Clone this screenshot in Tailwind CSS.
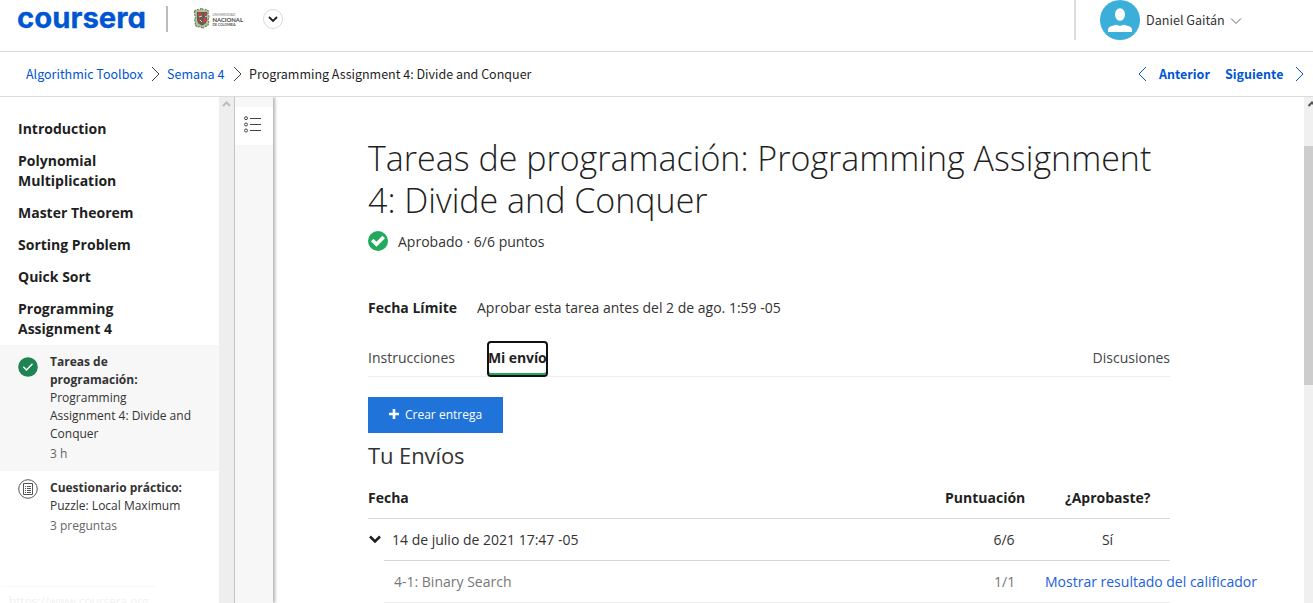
<!DOCTYPE html>
<html lang="es">
<head>
<meta charset="utf-8">
<title>Coursera</title>
<script src="https://cdn.jsdelivr.net/npm/@tailwindcss/browser@4"></script>
</head>
<body class="w-[1313px] h-[603px] overflow-hidden bg-white font-['Open_Sans',sans-serif] text-[14px] leading-5 text-[#1f1f1f]">
<div class="flex flex-col h-[603px]">
  <header class="h-[52px] shrink-0 border-b border-[#dcdcdc] flex items-start">
    <svg class="ml-[18px] mt-1 shrink-0 overflow-visible" width="128" height="30" viewBox="0 0 128 30"><text x="-1" y="23.5" textLength="129" lengthAdjust="spacingAndGlyphs" fill="#0056d2" stroke="#0056d2" stroke-width=".3" class="font-['Inter',sans-serif] text-[29px] font-bold [font-feature-settings:'cv11','ss03']">coursera</text></svg>
    <div class="ml-[20px] mt-[6px] w-[2px] h-[26px] bg-[#bbb]"></div>
    <svg class="ml-[25px] mt-[7px]" width="52" height="24" viewBox="0 0 52 24">
      <path d="M1.500 4l2.500-1.500 2.500.5 2-2 2 2 2.500-.5L15.500 4l-.5 3 1 3-1 3 1 3-1.500 3-3 .5-2 2-2-2-3 .5L2 18l.5-3-1-2 1-3-1-3z" fill="#b3bf9c" stroke="#71825c" stroke-width="1.200" stroke-dasharray="2 1"/>
      <path d="M4 5h10v8q-.5 4-5 5.500q-4.500-1.500-5-5.500z" fill="#5b6055"/>
      <path d="M5 6h3.500v4H5zM10 11h3.500v2.500l-2 2.500H10zM11 6h2.500v2.500H11zM5 12h2v2H5z" fill="#d13a48"/>
      <path d="M7 13l2 2M6 10l3-1M10 4l2-2M12 10l2-1" stroke="#d8d6cc" stroke-width="1"/>
      <text x="19.500" y="9" textLength="23" lengthAdjust="spacingAndGlyphs" fill="#777" class="font-['Lato',sans-serif] text-[3.200px]">UNIVERSIDAD</text>
      <text x="19.500" y="14.700" textLength="30.500" lengthAdjust="spacingAndGlyphs" fill="#444" class="font-['Lato',sans-serif] text-[5.500px] font-bold">NACIONAL</text>
      <text x="19.500" y="18.500" textLength="23" lengthAdjust="spacingAndGlyphs" fill="#555" class="font-['Lato',sans-serif] text-[3px] font-bold">DE COLOMBIA</text>
    </svg>
    <svg class="ml-[17px] mt-[8px]" width="22" height="22" viewBox="0 0 22 22" fill="none"><circle cx="11" cy="11" r="9.500" stroke="#d9d9d9"/><path d="M7 9l4 4 4-4" stroke="#1f1f1f" stroke-width="1.800"/></svg>
    <div class="ml-auto w-[2px] h-10 bg-[#ddd]"></div>
    <svg class="ml-6" width="40" height="40" viewBox="0 0 40 40"><circle cx="20" cy="20" r="20" fill="#3bafda"/><ellipse cx="20" cy="14.500" rx="5" ry="6.300" fill="#fff"/><path d="M8 32v-2q0-3 3.500-4l5-1.200q3.500 2 7 0l5 1.200q3.500 1 3.500 4v2z" fill="#fff"/></svg>
    <div class="ml-[6px] mt-[10px] w-[80px] whitespace-nowrap font-['Noto_Sans_CJK_SC',sans-serif] text-[12.600px] text-[#333]">Daniel Gaitán</div>
    <svg class="ml-1 mr-[71px] mt-[15px]" width="12" height="12" viewBox="0 0 12 12" fill="none" stroke="#666"><path d="M1 3.500l5 5 5-5"/></svg>
  </header>
  <nav class="h-[45px] shrink-0 border-b border-[#dcdcdc] flex items-center whitespace-nowrap font-['Noto_Sans_CJK_SC',sans-serif] text-[12.500px] text-[#0056d2]">
    <div class="ml-[26px] w-[118px]">Algorithmic Toolbox</div>
    <svg class="ml-[7px]" width="10" height="16" viewBox="0 0 10 16" fill="none" stroke="#444"><path d="M1 1l7 7-7 7"/></svg>
    <div class="ml-[6px] w-[59px]">Semana 4</div>
    <svg class="ml-[7px]" width="10" height="16" viewBox="0 0 10 16" fill="none" stroke="#444"><path d="M1 1l7 7-7 7"/></svg>
    <div class="ml-[6px] text-[#1f1f1f]">Programming Assignment 4: Divide and Conquer</div>
    <svg class="ml-auto" width="10" height="16" viewBox="0 0 10 16" fill="none" stroke="#0056d2"><path d="M8 1L1 8l7 7"/></svg>
    <div class="ml-[11px] w-[51px] font-bold">Anterior</div>
    <div class="ml-[15px] w-[59px] font-bold">Siguiente</div>
    <svg class="ml-[11px] mr-[8px]" width="10" height="16" viewBox="0 0 10 16" fill="none" stroke="#0056d2"><path d="M1 1l7 7-7 7"/></svg>
  </nav>
  <div class="flex h-[506px]">
    <aside class="w-[219px] shrink-0 pt-[22px] overflow-hidden">
      <div class="pl-[18px] flex flex-col gap-3 font-bold">
        <div>Introduction</div><div>Polynomial<br>Multiplication</div><div>Master Theorem</div><div>Sorting Problem</div><div>Quick Sort</div><div>Programming<br>Assignment 4</div>
      </div>
      <div class="mt-[6px] h-[126px] bg-[#f7f7f7] pt-2 pl-[18px] flex gap-3 text-[12px] leading-[18px] text-[#333]">
        <svg class="mt-1 shrink-0" width="20" height="20" viewBox="0 0 20 20"><circle cx="10" cy="10" r="9.800" fill="#1f8354"/><path d="M5.300 9.800l3.200 3.200 6-6.200" stroke="#fff" stroke-width="1.400" fill="none"/></svg>
        <div><b class="font-bold">Tareas de<br>programación:</b><br>Programming<br>Assignment 4: Divide and<br>Conquer<div class="mt-0.5 text-[#666]">3 h</div></div>
      </div>
      <div class="pt-2 pl-[18px] flex gap-3 text-[12px] leading-[18px] text-[#333]">
        <svg class="shrink-0" width="20" height="20" viewBox="0 0 20 20" fill="none" stroke="#555"><circle cx="10" cy="10" r="9.300"/><path d="M5.500 4.500h9v11h-9z"/><path d="M9 7.500h4M9 9.500h4M9 11.500h4M9 13.500h4M7 7.500h1M7 9.500h1M7 11.500h1M7 13.500h1"/></svg>
        <div><b class="font-bold">Cuestionario práctico:</b><br>Puzzle: Local Maximum<div class="mt-0.5 text-[#666]">3 preguntas</div></div>
      </div>
      <div class="mt-[51px] ml-[2px] w-[154px] border-t border-[#f8f8f8] pl-[7px] pt-[5px] text-[11.700px] leading-[18px] text-[#f1f1f1] whitespace-nowrap">https://www.coursera.org</div>
    </aside>
    <div class="w-[15px] shrink-0 bg-[#eee] flex justify-center"><svg class="mt-[3px]" width="9" height="9" viewBox="0 0 9 9" fill="none" stroke="#bcbcbc" stroke-width="2"><path d="M1 6l3.500-3.500L8 6"/></svg></div>
    <div class="w-[39px] shrink-0 border-l border-[#c4c4c4] bg-[#f7f7f7] pt-[10px] shadow-[2px_0_3px_rgba(0,0,0,0.3)] [clip-path:inset(0_-8px_0_0)]">
      <div class="h-[38px] bg-white pl-[9px] pt-[8px]"><svg width="18" height="20" viewBox="0 0 18 20" fill="none" stroke="#444"><circle cx="2" cy="3.200" r="1.500"/><circle cx="2" cy="9.500" r="1.500"/><circle cx="2" cy="15.500" r="1.500"/><path d="M6 3.500h11M6 9.500h11M6 15.500h11"/></svg></div>
    </div>
    <main class="w-[1031px] shrink-0 pl-[95px] pt-[40px]">
      <div class="w-[802px]">
        <h1 class="text-[34px] leading-[42px] font-light whitespace-nowrap">Tareas de programación: Programming Assignment<br>4: Divide and Conquer</h1>
        <div class="mt-[9px] h-[23px] flex items-start">
          <svg class="mt-px" width="20" height="20" viewBox="0 0 20 20"><circle cx="10" cy="10" r="10" fill="#21a95c"/><path d="M4.200 9l4.300 4.200 7.200-7.200" stroke="#fff" stroke-width="3.600" fill="none"/></svg>
          <span class="ml-[10px] mt-[2px] text-[#333]">Aprobado · 6/6 puntos</span>
        </div>
        <div class="mt-[45px] flex whitespace-nowrap"><b class="w-[109px] font-bold">Fecha Límite</b><span class="text-[#333]">Aprobar esta tarea antes del 2 de ago. 1:59 -05</span></div>
        <div class="mt-[23px] h-[36px] flex items-start border-b border-[#eee] whitespace-nowrap text-[#444]">
          <span class="w-[119px] mt-[7px]">Instrucciones</span>
          <div class="w-[61px] h-[36px] border-2 border-[#111] rounded-[4px] bg-white shadow-[inset_0_-2px_0_#21a95c] pt-[5px] font-bold tracking-[-0.1px] text-[#1f1f1f]"><span class="-ml-px">Mi envío</span></div>
          <span class="ml-auto mt-[7px]">Discusiones</span>
        </div>
        <button class="mt-[20px] w-[135px] h-[36px] bg-[#2073d8] text-white text-[12px] flex items-center pl-[21px]"><svg class="mr-[6px] mb-[2px]" width="10" height="10" viewBox="0 0 10 10" stroke="#fff" stroke-width="2.600"><path d="M5 0v10M0 5h10"/></svg>Crear entrega</button>
        <h2 class="mt-[8px] text-[22px] leading-[28px] font-normal tracking-[-0.1px] text-[#333]">Tu Envíos</h2>
        <div class="mt-[8px] h-[42px] border-b border-[#d8d8d8] flex items-center font-bold"><span class="w-[577px]">Fecha</span><span class="w-[80px] whitespace-nowrap">Puntuación</span><span class="ml-[40px] whitespace-nowrap">¿Aprobaste?</span></div>
        <div class="h-[41px] flex items-center text-[#333]"><svg class="ml-px mr-[11px]" width="12" height="9" viewBox="0 0 12 9" fill="none" stroke="#1f1f1f" stroke-width="2.500"><path d="M1 1.500l5 5 5-5"/></svg><span class="w-[549px]">14 de julio de 2021 17:47 -05</span><span class="w-[126px] text-center">6/6</span><span class="w-[81px] text-center">Sí</span></div>
        <div class="ml-[16px] h-[43px] border-y border-t-[#d8d8d8] border-b-[#eee] flex items-center whitespace-nowrap text-[#777]"><span class="ml-[10px] shrink-0 w-[600px]">4-1: Binary Search</span><span class="w-[51px] shrink-0">1/1</span><span class="shrink-0 text-[#2060dc]">Mostrar resultado del calificador</span></div>
      </div>
    </main>
    <div class="w-[9px] shrink-0 bg-[#f0f0f0] overflow-hidden"><svg class="block" width="15" height="49" viewBox="0 0 15 49" fill="none" stroke="#555" stroke-width="2"><path d="M4.500 9L8 5.500 11.500 9"/></svg><div class="h-[239px] bg-[#cdcdcd]"></div></div>
  </div>
</div>
</body>
</html>
